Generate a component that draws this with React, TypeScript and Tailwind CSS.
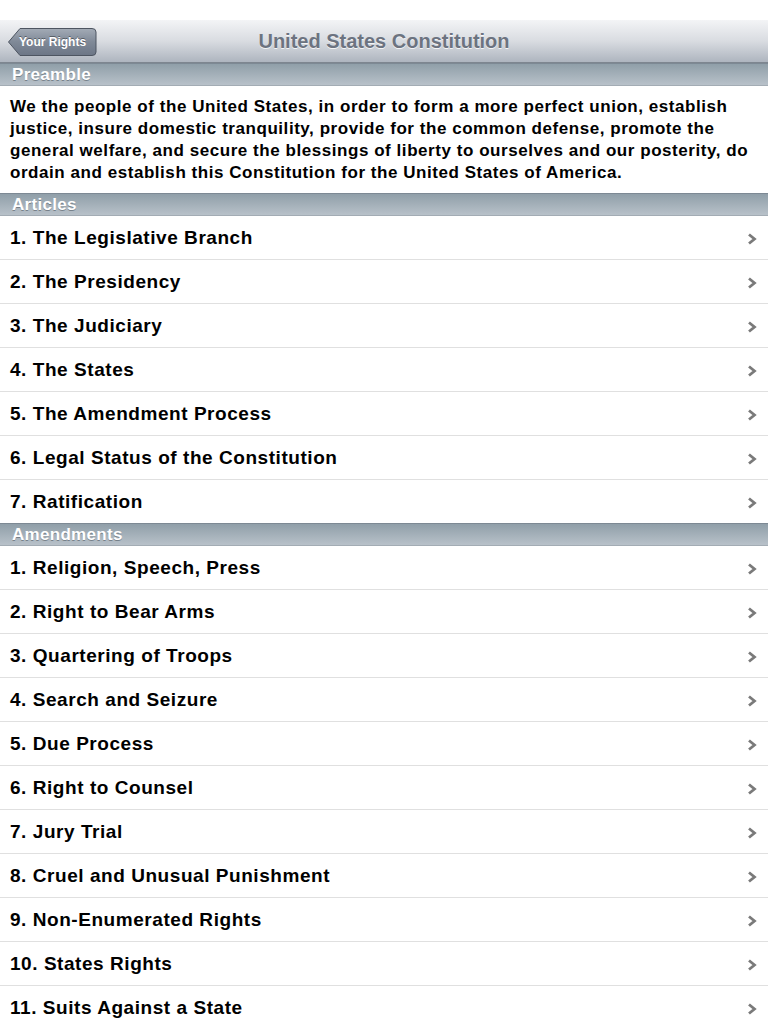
const articles = [
  '1. The Legislative Branch',
  '2. The Presidency',
  '3. The Judiciary',
  '4. The States',
  '5. The Amendment Process',
  '6. Legal Status of the Constitution',
  '7. Ratification',
];

const amendments = [
  '1. Religion, Speech, Press',
  '2. Right to Bear Arms',
  '3. Quartering of Troops',
  '4. Search and Seizure',
  '5. Due Process',
  '6. Right to Counsel',
  '7. Jury Trial',
  '8. Cruel and Unusual Punishment',
  '9. Non-Enumerated Rights',
  '10. States Rights',
  '11. Suits Against a State',
];

const SectionHeader = ({ title }: { title: string }) => (
  <div className="h-[23px] border-t border-t-[#7d8994] border-b border-b-[#a3acb4] bg-gradient-to-b from-[#909fa9] to-[#b8c1c9] px-[12px] flex items-center">
    <span className="text-white font-bold text-[17px] leading-none tracking-[0.3px] [text-shadow:0_1px_0_rgba(80,90,100,0.6)]">
      {title}
    </span>
  </div>
);

const Chevron = () => (
  <svg width="10" height="12" viewBox="0 0 10 12" className="mr-[2px]">
    <polyline points="2,1.5 7.5,6 2,10.5" fill="none" stroke="#7a7a7a" strokeWidth="2.8" />
  </svg>
);

const Row = ({ label, last }: { label: string; last: boolean }) => (
  <div
    className={
      last
        ? 'h-[43px] flex items-center justify-between pl-[10px] pr-[9px] pt-[2px] bg-white'
        : 'h-[44px] flex items-center justify-between pl-[10px] pr-[9px] pt-[2px] bg-white border-b border-[#e0e0e0]'
    }
  >
    <span className="text-[19px] font-bold tracking-[0.55px] text-black">{label}</span>
    <Chevron />
  </div>
);

export default function App() {
  return (
    <div className="w-[768px] h-[1024px] overflow-hidden bg-white font-['Liberation_Sans',Arial,sans-serif]">
      <div className="h-[20px] bg-white" />
      <div className="h-[43px] relative flex items-center justify-center bg-gradient-to-b from-[#f3f4f6] via-[#d9dce1] to-[#aeb5bf] border-b border-[#7e8690]">
        <div className="absolute left-[8px] top-[7px] flex items-center">
          <svg width="96" height="30" viewBox="0 0 96 30" className="absolute left-0 top-0">
            <defs>
              <linearGradient id="bk" x1="0" y1="0" x2="0" y2="1">
                <stop offset="0" stopColor="#a3abb6" />
                <stop offset="0.5" stopColor="#7f8997" />
                <stop offset="1" stopColor="#6c7686" />
              </linearGradient>
            </defs>
            <path
              d="M0.5 15 L12 1.5 H84 Q88 1.5 88 5 V25 Q88 28.5 84 28.5 H12 Z"
              fill="url(#bk)"
              stroke="#4d5561"
              strokeWidth="1"
            />
          </svg>
          <span className="relative pl-[11px] w-[88px] h-[30px] flex items-center text-white font-bold text-[12px] [text-shadow:0_-1px_0_rgba(0,0,0,0.4)]">
            Your Rights
          </span>
        </div>
        <span className="text-[20px] font-bold text-[#6c7380] [text-shadow:0_1px_0_rgba(255,255,255,0.8)]">
          United States Constitution
        </span>
      </div>
      <SectionHeader title="Preamble" />
      <p className="px-[10px] pt-[10px] pb-[9px] text-[17px] leading-[22px] font-bold tracking-[0.55px] text-black whitespace-nowrap">
        We the people of the United States, in order to form a more perfect union, establish
        <br />
        justice, insure domestic tranquility, provide for the common defense, promote the
        <br />
        general welfare, and secure the blessings of liberty to ourselves and our posterity, do
        <br />
        ordain and establish this Constitution for the United States of America.
      </p>
      <SectionHeader title="Articles" />
      {articles.map((a, i) => (
        <Row key={a} label={a} last={i === articles.length - 1} />
      ))}
      <SectionHeader title="Amendments" />
      {amendments.map((a, i) => (
        <Row key={a} label={a} last={i === amendments.length - 1} />
      ))}
    </div>
  );
}
